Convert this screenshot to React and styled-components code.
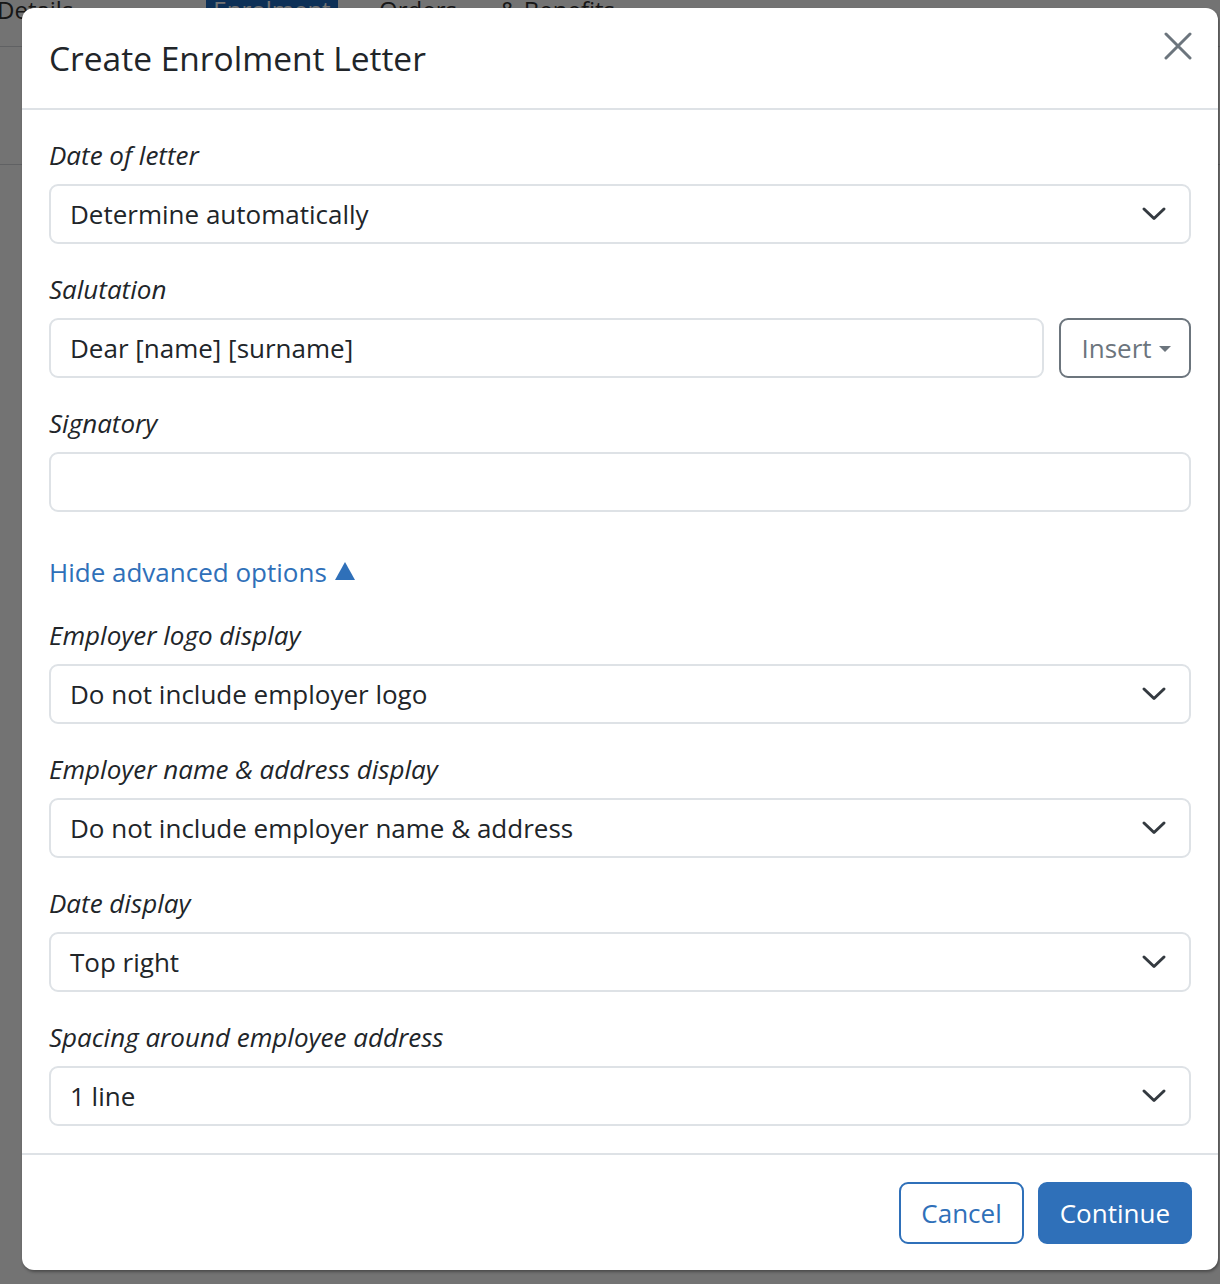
import React from "react";
import styled, { createGlobalStyle } from "styled-components";

const GlobalStyle = createGlobalStyle`
  html, body {
    margin: 0;
    padding: 0;
    background: #fff;
  }
  body {
    font-family: "Open Sans", "Noto Sans", sans-serif;
    color: #212529;
  }
  * {
    box-sizing: border-box;
  }
`;

// page behind the dialog
const Page = styled.div`
  width: 1220px;
  height: 1284px;
  position: relative;
  overflow: hidden;
  background: #fff;
`;
const TabBar = styled.div`
  height: 55px;
  margin-top: -8px;
  display: flex;
  align-items: flex-start;
  border-bottom: 1px solid #d5d8dc;
`;
const Tab = styled.div`
  width: ${(props) => props.width};
  margin-left: ${(props) => props.left || "0"};
  font-size: 24px;
  line-height: 36px;
  white-space: nowrap;
  text-align: ${(props) => (props.active ? "center" : "left")};
  color: ${(props) => (props.active ? "#fff" : "#333")};
  background: ${(props) => (props.active ? "#1e6ac0" : "transparent")};
`;
const PageSection = styled.div`
  height: 118px;
  border-bottom: 1px solid #d5d8dc;
`;

const Backdrop = styled.div`
  position: absolute;
  inset: 0;
  background: rgba(0, 0, 0, 0.55);
`;

const Dialog = styled.div`
  position: absolute;
  left: 22px;
  top: 8px;
  width: 1196px;
  height: 1262px;
  background: #fff;
  border-radius: 12px;
  box-shadow: 1px 2px 3px rgba(0, 0, 0, 0.35);
  display: flex;
  flex-direction: column;
`;

const Header = styled.div`
  height: 102px;
  padding: 0 27px;
  display: flex;
  align-items: center;
  justify-content: space-between;
  border-bottom: 2px solid #dee2e6;
`;
const Title = styled.h5`
  margin: 0;
  font-size: 33.5px;
  font-weight: 500;
  line-height: 1.2;
  color: #212529;
`;
const CloseButton = styled.button`
  border: 0;
  background: none;
  padding: 0;
  width: 28px;
  height: 28px;
  display: flex;
  align-items: center;
  justify-content: center;
  margin-right: -1px;
  margin-top: -24px;
`;

const Body = styled.div`
  padding: 27px;
  flex: 1;
`;
const Group = styled.div`
  margin-bottom: ${(props) => props.mb || "27px"};
`;
const Label = styled.div`
  font-size: 26px;
  line-height: 36px;
  font-style: italic;
  color: #212529;
  margin-bottom: 11px;
`;
const Field = styled.div`
  height: 60px;
  border: 2px solid #dee2e6;
  border-radius: 9px;
  padding: 0 22px 0 19px;
  display: flex;
  align-items: center;
  justify-content: space-between;
  font-size: 26px;
  color: #212529;
  flex: 1;
`;
const Row = styled.div`
  display: flex;
  gap: 15px;
`;
const InsertButton = styled.button`
  height: 60px;
  width: 132px;
  border: 2px solid #6c757d;
  border-radius: 9px;
  background: #fff;
  color: #6c757d;
  font-family: inherit;
  font-size: 26px;
  display: flex;
  align-items: center;
  justify-content: center;
  gap: 7px;
  padding: 0 0 0 2px;
`;
const Caret = styled.span`
  width: 0;
  height: 0;
  border-left: 6px solid transparent;
  border-right: 6px solid transparent;
  border-top: 6px solid #6c757d;
  margin-top: 1px;
`;
const ToggleLink = styled.a`
  display: inline-flex;
  align-items: center;
  gap: 8px;
  font-size: 26px;
  line-height: 36px;
  color: #2f70b9;
  text-decoration: none;
  margin: 42px 0 27px;
`;
const Triangle = styled.span`
  width: 0;
  height: 0;
  border-left: 10px solid transparent;
  border-right: 10px solid transparent;
  border-bottom: 18px solid #2f70b9;
  margin-top: -2px;
`;

const Footer = styled.div`
  border-top: 2px solid #dee2e6;
  padding: 27px 26px 26px;
  display: flex;
  justify-content: flex-end;
  gap: 14px;
`;
const Button = styled.button`
  height: 62px;
  padding: 0 20px;
  border-radius: 9px;
  font-family: inherit;
  font-size: 26px;
  border: 2px solid #2f70b9;
  background: ${(props) => (props.primary ? "#2f70b9" : "#fff")};
  color: ${(props) => (props.primary ? "#fff" : "#2f70b9")};
`;

function Chevron() {
  return (
    <svg width="26" height="16" viewBox="0 0 26 16">
      <path
        d="M3 3 L13 12.5 L23 3"
        fill="none"
        stroke="#343a40"
        strokeWidth="3"
        strokeLinecap="round"
        strokeLinejoin="round"
      />
    </svg>
  );
}

function CloseIcon() {
  return (
    <svg width="28" height="28" viewBox="0 0 28 28">
      <path
        d="M2 2 L26 26 M26 2 L2 26"
        stroke="#6c757d"
        strokeWidth="3"
        strokeLinecap="round"
      />
    </svg>
  );
}

function Select({ value }) {
  return (
    <Field>
      <span>{value}</span>
      <Chevron />
    </Field>
  );
}

const advanced = [
  { label: "Employer logo display", value: "Do not include employer logo" },
  {
    label: "Employer name & address display",
    value: "Do not include employer name & address",
  },
  { label: "Date display", value: "Top right" },
  { label: "Spacing around employee address", value: "1 line" },
];

export default function App() {
  return (
    <Page>
      <GlobalStyle />
      <TabBar>
        <Tab left="-3px" width="209px">Details</Tab>
        <Tab active width="132px">Enrolment</Tab>
        <Tab left="41px" width="121px">Orders</Tab>
        <Tab width="160px">&amp; Benefits</Tab>
      </TabBar>
      <PageSection />
      <Backdrop />
      <Dialog>
        <Header>
          <Title>Create Enrolment Letter</Title>
          <CloseButton>
            <CloseIcon />
          </CloseButton>
        </Header>
        <Body>
          <Group>
            <Label>Date of letter</Label>
            <Select value="Determine automatically" />
          </Group>
          <Group>
            <Label>Salutation</Label>
            <Row>
              <Field>Dear [name] [surname]</Field>
              <InsertButton>
                Insert <Caret />
              </InsertButton>
            </Row>
          </Group>
          <Group mb="0">
            <Label>Signatory</Label>
            <Field />
          </Group>
          <ToggleLink href="#">
            Hide advanced options <Triangle />
          </ToggleLink>
          {advanced.map((item, i) => (
            <Group key={item.label} mb={i === advanced.length - 1 ? "0" : "27px"}>
              <Label>{item.label}</Label>
              <Select value={item.value} />
            </Group>
          ))}
        </Body>
        <Footer>
          <Button>Cancel</Button>
          <Button primary>Continue</Button>
        </Footer>
      </Dialog>
    </Page>
  );
}
